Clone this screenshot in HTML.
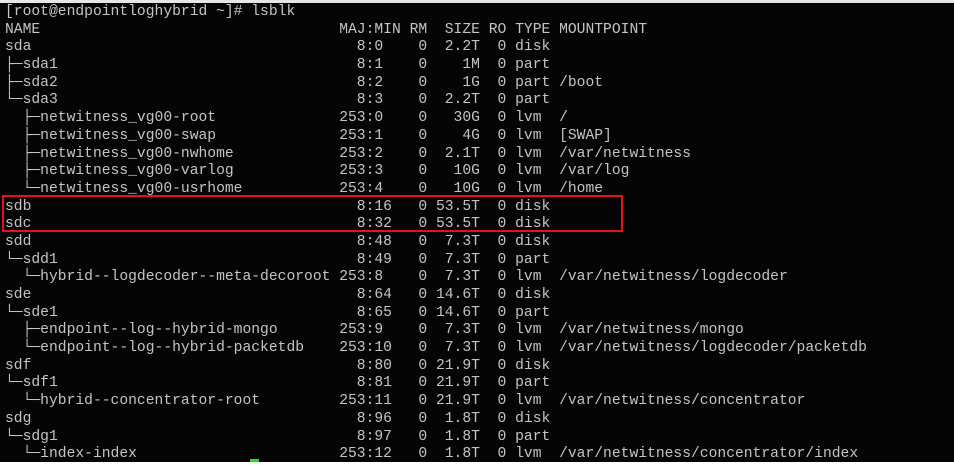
<!DOCTYPE html>
<html><head><meta charset="utf-8"><style>
html,body{margin:0;padding:0;width:954px;height:465px;overflow:hidden;background:#fff}
#t{position:absolute;left:0;top:3px;width:954px;height:459px;background:#050505}
pre{position:absolute;left:5px;top:4px;margin:0;font-family:"Liberation Mono","DejaVu Sans Mono",monospace;font-size:14.67px;line-height:17.68px;color:#c4c4c4;white-space:pre}
.n{display:inline-block;width:38ch;overflow:visible}
#box{position:absolute;left:2px;top:195px;width:617px;height:33px;border:2px solid #e8101a}
#cur{position:absolute;left:250px;top:459px;width:9px;height:3px;background:#1fe01f}
#tb{position:absolute;left:0;top:0;width:954px;height:3px;background:#e6e6e6}
</style></head><body>
<div id="tb"></div>
<div id="t"></div>
<pre>[root@endpointloghybrid ~]# lsblk
<span class="n">NAME</span>MAJ:MIN RM  SIZE RO TYPE MOUNTPOINT
<span class="n">sda</span>  8:0    0  2.2T  0 disk
<span class="n">├─sda1</span>  8:1    0    1M  0 part
<span class="n">├─sda2</span>  8:2    0    1G  0 part /boot
<span class="n">└─sda3</span>  8:3    0  2.2T  0 part
<span class="n">  ├─netwitness_vg00-root</span>253:0    0   30G  0 lvm  /
<span class="n">  ├─netwitness_vg00-swap</span>253:1    0    4G  0 lvm  [SWAP]
<span class="n">  ├─netwitness_vg00-nwhome</span>253:2    0  2.1T  0 lvm  /var/netwitness
<span class="n">  ├─netwitness_vg00-varlog</span>253:3    0   10G  0 lvm  /var/log
<span class="n">  └─netwitness_vg00-usrhome</span>253:4    0   10G  0 lvm  /home
<span class="n">sdb</span>  8:16   0 53.5T  0 disk
<span class="n">sdc</span>  8:32   0 53.5T  0 disk
<span class="n">sdd</span>  8:48   0  7.3T  0 disk
<span class="n">└─sdd1</span>  8:49   0  7.3T  0 part
<span class="n">  └─hybrid--logdecoder--meta-decoroot</span>253:8    0  7.3T  0 lvm  /var/netwitness/logdecoder
<span class="n">sde</span>  8:64   0 14.6T  0 disk
<span class="n">└─sde1</span>  8:65   0 14.6T  0 part
<span class="n">  ├─endpoint--log--hybrid-mongo</span>253:9    0  7.3T  0 lvm  /var/netwitness/mongo
<span class="n">  └─endpoint--log--hybrid-packetdb</span>253:10   0  7.3T  0 lvm  /var/netwitness/logdecoder/packetdb
<span class="n">sdf</span>  8:80   0 21.9T  0 disk
<span class="n">└─sdf1</span>  8:81   0 21.9T  0 part
<span class="n">  └─hybrid--concentrator-root</span>253:11   0 21.9T  0 lvm  /var/netwitness/concentrator
<span class="n">sdg</span>  8:96   0  1.8T  0 disk
<span class="n">└─sdg1</span>  8:97   0  1.8T  0 part
<span class="n">  └─index-index</span>253:12   0  1.8T  0 lvm  /var/netwitness/concentrator/index</pre>
<div id="box"></div>
<div id="cur"></div>
</body></html>
